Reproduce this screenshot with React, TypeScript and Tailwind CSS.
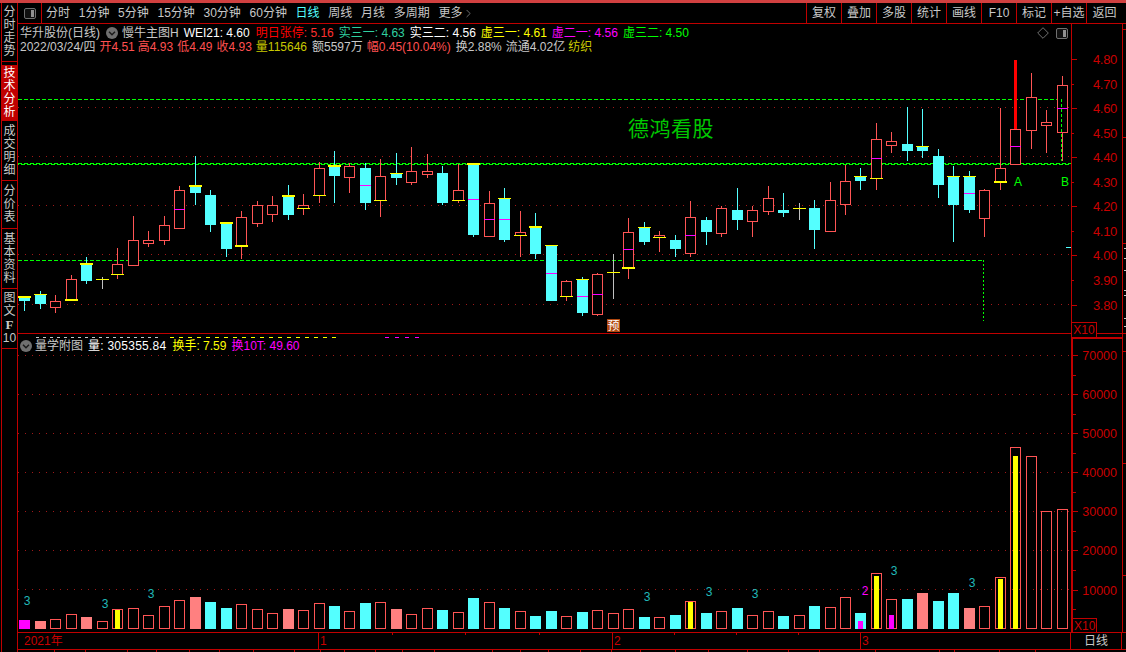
import { ChevronRight } from "lucide-react";

const RED = "#ff5555";
const CYAN = "#54ffff";
const YELLOW = "#ffff00";
const MAGENTA = "#ff00ff";
const GRID = "#a01818";
const LINE = "#c00000";
const AXIS = "#c80000";
const GREEN = "#00ff00";

// hi, top, bottom, lo, kind, yellow cap (+top / -bottom, value = thickness), magenta line y
type Candle = [number, number, number, number, "r" | "c" | "d", number?, number?];

const candles: Candle[] = [
  [296, 297, 301, 311, "c", 2],
  [291, 294, 304, 309, "c", 1],
  [295, 301, 307, 313, "r"],
  [275, 279, 299, 301, "r", -2],
  [257, 264, 281, 284, "c", 2],
  [277, 279, 279, 289, "d", 1],
  [248, 264, 274, 279, "r", -1],
  [216, 240, 265, 265, "r"],
  [231, 240, 243, 247, "r"],
  [216, 225, 240, 245, "r"],
  [186, 190, 228, 228, "r", 0, 209],
  [156, 186, 193, 205, "c", 2],
  [190, 195, 225, 232, "c"],
  [223, 223, 249, 257, "c", 2],
  [211, 217, 245, 259, "r", -2],
  [201, 205, 223, 227, "r"],
  [196, 205, 214, 222, "r"],
  [185, 196, 215, 220, "c", 2],
  [194, 205, 208, 215, "r", -1],
  [162, 168, 195, 203, "r", -1],
  [151, 166, 176, 203, "c", 2],
  [163, 166, 177, 193, "r"],
  [163, 168, 203, 210, "c", 0, 185],
  [159, 176, 200, 217, "r", -1],
  [153, 173, 178, 185, "c", 1],
  [147, 171, 182, 185, "r"],
  [154, 171, 174, 178, "r"],
  [166, 173, 203, 205, "c"],
  [164, 190, 200, 203, "r", -1],
  [163, 164, 235, 237, "c", 2, 199],
  [191, 203, 236, 236, "r", 0, 219],
  [188, 198, 240, 242, "c", 1, 219],
  [211, 232, 235, 257, "r", -1],
  [213, 227, 254, 259, "c", 2],
  [245, 245, 301, 301, "c", 1, 273],
  [280, 281, 296, 301, "r", -1],
  [277, 279, 313, 316, "c", 1, 296],
  [273, 274, 314, 316, "r", 0, 294],
  [254, 272, 272, 299, "d", 1],
  [218, 232, 267, 279, "r", -2, 249],
  [222, 227, 242, 245, "c", 1],
  [231, 235, 237, 252, "r", -1],
  [235, 240, 249, 257, "c"],
  [201, 217, 253, 257, "r", 0, 235],
  [217, 220, 232, 245, "c"],
  [206, 208, 233, 237, "r"],
  [188, 210, 220, 230, "c"],
  [206, 210, 221, 237, "r"],
  [186, 198, 211, 215, "r"],
  [193, 210, 213, 217, "c"],
  [203, 208, 208, 220, "d", 1],
  [200, 208, 230, 249, "c"],
  [182, 200, 231, 231, "r"],
  [165, 181, 204, 215, "r"],
  [168, 176, 181, 190, "c", 1],
  [123, 139, 178, 190, "r", -1, 158],
  [132, 141, 145, 153, "r"],
  [107, 144, 151, 161, "c"],
  [109, 146, 151, 158, "c", 1],
  [149, 156, 185, 198, "c"],
  [166, 176, 205, 242, "c", 1],
  [171, 176, 210, 213, "c", 1, 193],
  [189, 190, 218, 237, "r"],
  [108, 168, 181, 190, "r", -2],
  [129, 129, 164, 165, "r", 0, 146],
  [73, 97, 130, 149, "r"],
  [110, 122, 125, 153, "r"],
  [76, 85, 132, 161, "r", 0, 108],
];

// top y, kind: h hollow, c cyan, s salmon, m magenta; inner fill top y + colour
type VolBar = [number, "h" | "c" | "s" | "m", number?, string?];

const volumes: VolBar[] = [
  [620, "m"], [621, "s"], [619, "h"], [614, "h"], [617, "s"], [621, "h"],
  [609, "h", 610, YELLOW], [608, "h"], [615, "h"], [606, "h"], [600, "h"], [597, "s"],
  [602, "c"], [608, "c"], [604, "h"], [609, "h"], [613, "h"], [609, "s"],
  [610, "h"], [603, "h"], [606, "c"], [611, "h"], [603, "c"], [602, "h"],
  [609, "s"], [614, "h"], [608, "h"], [610, "c"], [612, "h"], [598, "c"],
  [602, "h"], [608, "c"], [611, "h"], [616, "c"], [611, "c"], [616, "h"],
  [612, "c"], [610, "h"], [613, "h"], [609, "h"], [617, "c"], [617, "h"],
  [615, "c"], [601, "h", 602, YELLOW], [613, "c"], [611, "h"], [608, "c"], [615, "h"],
  [611, "h"], [616, "c"], [615, "h"], [606, "c"], [607, "h"], [597, "h"],
  [613, "c", 621, MAGENTA], [573, "h", 576, YELLOW], [599, "h", 615, MAGENTA], [599, "c"], [593, "s"], [601, "c"],
  [593, "c"], [608, "s"], [606, "h"], [577, "h", 579, YELLOW], [447, "h", 456, YELLOW], [456, "h"],
  [511, "h"], [509, "h"],
];

const cx = (i: number) => Math.floor(24.8 + 15.485 * i);

const periods = ["分时", "1分钟", "5分钟", "15分钟", "30分钟", "60分钟"];
const tools = ["复权", "叠加", "多股", "统计", "画线", "F10", "标记", "+自选"];
const priceLabels = [
  [59, "4.80"], [84, "4.70"], [108, "4.60"], [133, "4.50"], [157, "4.40"], [182, "4.30"],
  [206, "4.20"], [231, "4.10"], [255, "4.00"], [280, "3.90"], [305, "3.80"],
] as const;
const volLabels = [
  [355, "70000"], [394, "60000"], [433, "50000"], [472, "40000"], [511, "30000"], [550, "20000"], [590, "10000"],
] as const;
const marks = [
  [27, 605, "3", "#20b8b8"], [105, 608, "3", "#20b8b8"], [151, 598, "3", "#20b8b8"],
  [647, 601, "3", "#20b8b8"], [709, 596, "3", "#20b8b8"], [755, 598, "3", "#20b8b8"],
  [894, 575, "3", "#20b8b8"], [972, 587, "3", "#20b8b8"], [865, 595, "2", MAGENTA],
] as const;
const bottomTicks = [
  54, 85, 127, 156, 189, 219, 253, 294, 320, 344, 375, 402, 434, 492, 520, 548, 580, 611, 640, 675, 708, 747, 788,
  819, 875, 939, 954, 999, 1035,
];
const topTicks = [392, 465, 539, 674, 736, 798];

function PanelIcon() {
  return (
    <svg width="12" height="11" viewBox="0 0 12 11">
      <rect x="0.5" y="0.5" width="11" height="10" rx="1.5" fill="#101010" stroke="#707070" />
      <rect x="7" y="2" width="3" height="7" fill="#909090" />
    </svg>
  );
}

function RoundIcon() {
  return (
    <svg width="12" height="12" viewBox="0 0 12 12">
      <circle cx="6" cy="6" r="6" fill="#707070" />
      <path d="M3 4.8 L6 7.8 L9 4.8" fill="none" stroke="#1a1a1a" strokeWidth="1.4" />
    </svg>
  );
}

function SideTab({ chars, className }: { chars: string[]; className: string }) {
  return (
    <div className={`flex flex-col items-center justify-center border-b border-[#c00000] text-[12px] leading-[13px] ${className}`}>
      {chars.map((c, i) => (
        <span key={i}>{c}</span>
      ))}
    </div>
  );
}

function Sidebar() {
  return (
    <div className="ml-px flex w-[17px] shrink-0 flex-col border-x border-[#c00000] text-[#c8c8c8]">
      <SideTab chars={["分", "时", "走", "势"]} className="h-[59px] pb-px" />
      <div className="h-[4px] border-b border-[#c00000]" />
      <SideTab chars={["技", "术", "分", "析"]} className="h-[55px] bg-[#c00000] text-white" />
      <SideTab chars={["成", "交", "明", "细"]} className="h-[60px]" />
      <SideTab chars={["分", "价", "表"]} className="h-[48px]" />
      <SideTab chars={["基", "本", "资", "料"]} className="h-[60px]" />
      <div className="flex h-[60px] flex-col items-center justify-center border-b border-[#c00000] text-[12px] leading-[13px]">
        <span>图</span>
        <span>文</span>
        <span className="font-['Liberation_Serif',serif] text-[13px] font-bold">F</span>
        <span className="mt-px">10</span>
      </div>
    </div>
  );
}

function Toolbar() {
  return (
    <div className="flex h-[21px] shrink-0 items-center border-b border-[#c00000] text-[12px] text-[#c8c8c8]">
      <div className="flex h-full w-[24px] items-center justify-end border-r border-[#c00000] pr-[5px]">
        <PanelIcon />
      </div>
      <div className="ml-[4px] flex items-center gap-[8.7px]">
        {periods.map((p) => (
          <span key={p}>{p}</span>
        ))}
        <span className="text-[#54ffff]">日线</span>
        <span>周线</span>
        <span>月线</span>
        <span>多周期</span>
        <span className="flex items-center">
          更多
          <ChevronRight size={13} strokeWidth={1} />
        </span>
      </div>
      <div className="ml-auto flex h-full">
        {tools.map((t) => (
          <div key={t} className="flex w-[35px] items-center justify-center border-l border-[#c00000]">
            {t}
          </div>
        ))}
        <div className="flex w-[40px] items-center justify-center border-l border-[#c00000] pr-[4px]">返回</div>
      </div>
    </div>
  );
}

function ChartHeader() {
  return (
    <div className="absolute inset-x-0 top-0 pl-[2px] pr-[3px] pt-[2px] text-[12px] leading-[14px] text-[#c8c8c8]">
      <div className="flex items-center">
        <span>华升股份(日线)</span>
        <span className="ml-[6px] mr-[4px]">
          <RoundIcon />
        </span>
        <span>慢牛主图H</span>
        <span className="ml-[5px] text-white">WEI21: 4.60</span>
        <span className="ml-[6px] text-[#ff0000]">
          明日张停<span className="text-[#ff3030]">: 5.16</span>
        </span>
        <span className="ml-[5px] text-[#30d0a0]">实三一: 4.63</span>
        <span className="ml-[5px] text-white">实三二: 4.56</span>
        <span className="ml-[5px] text-[#ffff00]">虚三一: 4.61</span>
        <span className="ml-[5px] text-[#ff00ff]">虚二一: 4.56</span>
        <span className="ml-[5px] text-[#00ff00]">虚三二: 4.50</span>
        <span className="ml-auto flex items-center gap-[7px]">
          <svg width="12" height="12" viewBox="0 0 12 12">
            <path d="M6 0.7 L11.3 6 L6 11.3 L0.7 6 Z" fill="none" stroke="#707070" />
          </svg>
          <PanelIcon />
        </span>
      </div>
      <div className="flex items-center text-[#ff5050]">
        <span className="mr-[4px] text-[#c8c8c8]">2022/03/24/四</span>
        <span className="mr-[3px]">开4.51</span>
        <span className="mr-[4px]">高4.93</span>
        <span className="mr-[4px]">低4.49</span>
        <span className="mr-[4px]">收4.93</span>
        <span className="mr-[5px] text-[#c8c800]">量115646</span>
        <span className="mr-[4px] text-[#c8c8c8]">额5597万</span>
        <span className="mr-[5px]">幅0.45(10.04%)</span>
        <span className="mr-[4px] text-[#c8c8c8]">换2.88%</span>
        <span className="mr-[3px] text-[#c8c8c8]">流通4.02亿</span>
        <span className="text-[#c8c800]">纺织</span>
      </div>
    </div>
  );
}

function CandleShape({ c, i }: { c: Candle; i: number }) {
  const [hi, top, bot, lo, kind, cap = 0, mag] = c;
  const x = cx(i);
  const wick = kind === "c" ? CYAN : kind === "d" ? "#c0c0c0" : RED;
  const capY = cap > 0 ? top : bot;
  const capH = Math.abs(cap);
  return (
    <g>
      <line x1={x + 0.5} x2={x + 0.5} y1={hi} y2={lo} stroke={wick} />
      {kind === "c" && <rect x={x - 5} y={top} width={11} height={bot - top} fill={CYAN} />}
      {kind === "r" && (
        <rect x={x - 4.5} y={top + 0.5} width={10} height={bot - top} fill="#000" stroke={RED} />
      )}
      {mag && <rect x={x - 5} y={mag} width={11} height={1} fill={MAGENTA} />}
      {cap !== 0 && (
        <rect x={x - 6} y={cap > 0 ? capY - capH + 1 : capY} width={13} height={capH} fill={YELLOW} />
      )}
    </g>
  );
}

function PriceChart() {
  return (
    <svg className="block h-[309px] w-[1053px]" viewBox="18 24 1053 309">
      {[107.5, 156.5, 205.5, 254.5, 304.5].map((y) => (
        <line key={y} x1="18" x2="1071" y1={y} y2={y} stroke={GRID} strokeDasharray="1 6" />
      ))}
      <g stroke={GREEN} strokeDasharray="4 2" fill="none">
        <line x1="18" x2="1062" y1="99.5" y2="99.5" />
        <line x1="18" x2="1071" y1="163.5" y2="163.5" />
        <line x1="18" x2="1071" y1="164.5" y2="164.5" strokeDashoffset="3" />
        <line x1="18" x2="983" y1="260.5" y2="260.5" />
        <line x1="983.5" x2="983.5" y1="260" y2="321" strokeDasharray="2 2" />
      </g>
      {candles.map((c, i) => (
        <CandleShape key={i} c={c} i={i} />
      ))}
      <rect x="1014" y="60" width="3" height="69" fill="#ff0000" />
      <line x1="1061.5" x2="1061.5" y1="99" y2="161" stroke={GREEN} strokeDasharray="3 2" />
      <rect x="1066" y="247" width="5" height="1" fill={CYAN} />
      <text x="628" y="136" fontSize="21" letterSpacing="0.5" fill="#00c800">
        德鸿看股
      </text>
      <text x="1014" y="186" fontSize="12" fill={GREEN}>
        A
      </text>
      <text x="1061" y="186" fontSize="12" fill={GREEN}>
        B
      </text>
      <rect x="607" y="319" width="13" height="13" fill="#b04810" />
      <text x="607.5" y="330" fontSize="12" fill="#fff">
        预
      </text>
    </svg>
  );
}

function PriceAxis() {
  return (
    <div className="relative z-10 h-[309px] w-[55px]">
      <svg className="block h-[309px] w-[55px]" viewBox="1071 24 55 309">
        <line x1="1071.5" x2="1071.5" y1="24" y2="333" stroke={LINE} />
        <line x1="1122.5" x2="1122.5" y1="24" y2="333" stroke={LINE} />
        {priceLabels.map(([y, t], i) => (
          <g key={t}>
            <rect x="1071" y={y} width={i % 2 === 0 ? 6 : 3} height="1" fill={LINE} />
            <text x="1117" y={y + 5} fontSize="13" letterSpacing="-0.3" textAnchor="end" fill={AXIS}>
              {t}
            </text>
          </g>
        ))}
        {[29, 137, 243].map((y) => (
          <rect key={y} x="1122" y={y} width="4" height="1" fill={LINE} />
        ))}
        {[248, 258, 270, 290, 295, 318, 326].map((y) => (
          <rect key={y} x="1124" y={y} width="2" height="1" fill="#c8c8c8" />
        ))}
      </svg>
      {/* the X10 tag hangs across the panel's bottom line */}
      <div className="absolute left-0 top-[298px] flex h-[16px] w-[26px] items-center justify-center border border-[#c00000] bg-black text-[12px] leading-none text-[#c80000]">
        X10
      </div>
    </div>
  );
}

function VolumeChart() {
  return (
    <svg className="block h-[298px] w-[1053px]" viewBox="18 334 1053 298">
      {[355.5, 394.5, 433.5, 472.5, 511.5, 550.5, 589.5].map((y) => (
        <line key={y} x1="18" x2="1071" y1={y} y2={y} stroke={GRID} strokeDasharray="1 6" />
      ))}
      {/* tops of the clipped legend row */}
      <line x1="36" x2="160" y1="337.5" y2="337.5" stroke="#c8c8c8" strokeDasharray="3 4" />
      <line x1="170" x2="340" y1="337.5" y2="337.5" stroke={YELLOW} strokeDasharray="4 5" />
      <line x1="385" x2="422" y1="337.5" y2="337.5" stroke={MAGENTA} strokeDasharray="4 6" />
      {volumes.map(([top, kind, innerTop, innerColor], i) => {
        const x = cx(i);
        const fill = kind === "c" ? CYAN : kind === "s" ? "#ff8080" : kind === "m" ? MAGENTA : "none";
        return (
          <g key={i}>
            {kind === "h" ? (
              <rect x={x - 4.5} y={top + 0.5} width={10} height={629 - top - 1} fill="none" stroke={RED} />
            ) : (
              <rect x={x - 5} y={top} width={11} height={629 - top} fill={fill} />
            )}
            {innerTop && <rect x={x - 2} y={innerTop} width={5} height={629 - innerTop} fill={innerColor} />}
          </g>
        );
      })}
      {marks.map(([x, y, t, color]) => (
        <text key={`${x}-${y}`} x={x} y={y} fontSize="12" textAnchor="middle" fill={color}>
          {t}
        </text>
      ))}
    </svg>
  );
}

function VolumeAxis() {
  const minor = [375, 414, 453, 492, 531, 570, 609];
  return (
    <svg className="block h-[298px] w-[55px]" viewBox="1071 334 55 298">
      <rect x="1071" y="334" width="2" height="298" fill={LINE} />
      <rect x="1071" y="337" width="52" height="2" fill={LINE} />
      <rect x="1122" y="334" width="1" height="298" fill={LINE} />
      {volLabels.map(([y, t]) => (
        <g key={t}>
          <rect x="1073" y={y} width="5" height="1" fill={LINE} />
          <text x="1117" y={y + 5} fontSize="12.5" textAnchor="end" fill={AXIS}>
            {t}
          </text>
        </g>
      ))}
      {minor.map((y) => (
        <rect key={y} x="1073" y={y} width="3" height="1" fill={LINE} />
      ))}
      {[351, 463, 575].map((y) => (
        <rect key={y} x="1123" y={y} width="3" height="1" fill={LINE} />
      ))}
      <rect x="1072.5" y="618.5" width="24" height="14" fill="#000" stroke={LINE} />
      <text x="1074" y="630" fontSize="12" fill={AXIS}>
        X10
      </text>
    </svg>
  );
}

function DateStrip() {
  return (
    <div className="relative flex h-[17px] shrink-0 border-b border-[#c00000] text-[12px] leading-[16px] text-[#c80000]">
      <div className="w-[301px] border-r border-[#c00000] pl-[6px]">2021年</div>
      <div className="w-[294px] border-r border-[#c00000] pl-[1px]">1</div>
      <div className="w-[248px] border-r border-[#c00000] pl-[1px]">2</div>
      <div className="w-[210px] border-r border-[#c00000] pl-[1px]">3</div>
      <div className="w-[51px] border-r border-[#c00000] text-center text-[#c8c8c8]">日线</div>
      {/* ticks lie over the strip */}
      <svg className="absolute left-0 top-0 h-[19px] w-[1108px]" viewBox="18 633 1108 19">
        {topTicks.map((x) => (
          <rect key={x} x={x} y="633" width="1" height="2" fill={LINE} />
        ))}
        {bottomTicks.map((x) => (
          <rect key={x} x={x} y="649" width="1" height="3" fill={LINE} />
        ))}
      </svg>
    </div>
  );
}

export default function App() {
  return (
    <div className="flex h-[652px] w-[1126px] flex-col overflow-hidden bg-black font-['Liberation_Sans','Noto_Sans_CJK_SC',sans-serif]">
      <div className="h-[3px] shrink-0 bg-[#d04040]" />
      <div className="flex min-h-0 flex-1">
        <Sidebar />
        <div className="flex min-w-0 flex-1 flex-col">
          <Toolbar />
          <div className="flex h-[310px] shrink-0 border-b border-[#c00000]">
            <div className="relative w-[1053px]">
              <PriceChart />
              <ChartHeader />
            </div>
            <PriceAxis />
          </div>
          <div className="flex h-[299px] shrink-0 border-b border-[#c00000]">
            <div className="relative w-[1053px]">
              <VolumeChart />
              <div className="absolute left-[2px] top-[5px] flex items-center text-[12px] leading-[14px] text-[#c8c8c8]">
                <RoundIcon />
                <span className="ml-[3px]">量学附图</span>
                <span className="ml-[5px] tracking-[0.25px] text-white">量: 305355.84</span>
                <span className="ml-[6px] text-[#ffff00]">换手: 7.59</span>
                <span className="ml-[5px] text-[#ff00ff]">换10T: 49.60</span>
              </div>
            </div>
            <VolumeAxis />
          </div>
          <DateStrip />
        </div>
      </div>
    </div>
  );
}
